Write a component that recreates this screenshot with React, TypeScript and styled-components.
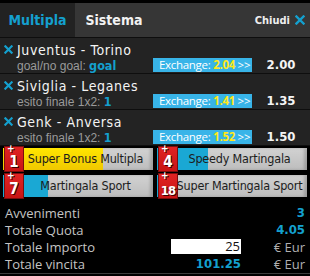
import React from "react";
import styled, { createGlobalStyle } from "styled-components";

const GlobalStyle = createGlobalStyle`
  html, body {
    margin: 0;
    padding: 0;
    background: #000;
  }
  * { box-sizing: border-box; }
`;

const blue = "#14a0cf";
const tahoma = `"DejaVu Sans Condensed", "DejaVu Sans", sans-serif`;
const segoe = `"Open Sans", "Liberation Sans", sans-serif`;

const Panel = styled.div`
  width: 310px;
  height: 276px;
  background: #000;
  border-top: 3px solid #000;
  font-family: ${tahoma};
  overflow: hidden;
`;

const Header = styled.div`
  display: flex;
  align-items: stretch;
  height: 35px;
  background: #363636;
  border-bottom: 1px solid #0e0e0e;
`;

const Tab = styled.div<{ active?: boolean }>`
  width: ${p => (p.active ? 75 : 78)}px;
  display: flex;
  align-items: center;
  justify-content: center;
  background: ${p => (p.active ? "#222" : "transparent")};
  color: ${p => (p.active ? blue : "#f2f2f2")};
  font-weight: bold;
  font-size: 14px;
`;

const Close = styled.div`
  margin-left: auto;
  display: flex;
  align-items: center;
  gap: 5px;
  padding-right: 5px;
  color: #eee;
  font-size: 11px;
  font-weight: bold;
`;

const Row = styled.div`
  height: 36px;
  background: #232323;
  border-bottom: 1px solid #0e0e0e;
  display: grid;
  grid-template-columns: 17px 1fr;
  padding-top: 4px;
`;

const RemoveIcon = styled.div`
  padding: 3px 0 0 4px;
`;

const RowBody = styled.div`
  display: flex;
  flex-direction: column;
`;

const Title = styled.div`
  height: 16px;
  line-height: 16px;
  color: #f4f4f4;
  font-size: 14px;
  letter-spacing: 0.6px;
`;

const Line = styled.div`
  display: flex;
  align-items: center;
  height: 14px;
`;

const Market = styled.div`
  flex: 1;
  align-self: flex-start;
  margin-top: 1px;
  font-family: "Liberation Sans", Arial, sans-serif;
  font-size: 12px;
  color: #9a9a9a;
  line-height: 13px;
`;

const Pick = styled.span`
  color: ${blue};
  font-family: ${tahoma};
  font-weight: bold;
  font-size: 12.5px;
`;

const Exchange = styled.div`
  width: 99px;
  height: 14px;
  background: #38b4e8;
  color: #fff;
  font-family: ${segoe};
  font-size: 11.5px;
  line-height: 14px;
  padding-left: 6px;
  white-space: nowrap;
  letter-spacing: -0.3px;
`;

const ExValue = styled.span`
  color: #ffe81a;
  font-weight: bold;
`;

const Odds = styled.div`
  width: 58px;
  text-align: center;
  color: #f4f4f4;
  font-weight: bold;
  font-size: 13px;
  line-height: 14px;
`;

const BonusGrid = styled.div`
  display: grid;
  grid-template-columns: 150px 150px;
  column-gap: 4px;
  row-gap: 5px;
  padding: 2px 3px 7px 3px;
`;

const BonusButton = styled.div`
  position: relative;
  height: 22px;
  background: linear-gradient(to bottom, #d2d2d2, #bdbdbd);
  box-shadow: inset -3px 0 3px rgba(0, 0, 0, 0.18);
`;

const Fill = styled.div<{ color: string }>`
  position: absolute;
  left: 0;
  top: 0;
  bottom: 0;
  background: ${p => p.color};
`;

const BonusLabel = styled.div`
  position: relative;
  height: 22px;
  line-height: 22px;
  padding: 0 3px 0 18px;
  text-align: center;
  white-space: nowrap;
  color: #1c1c1c;
  font-size: 12.5px;
  letter-spacing: -0.2px;
`;

const Badge = styled.div`
  position: absolute;
  left: 1px;
  top: -2px;
  width: 20px;
  height: 26px;
  background: linear-gradient(to bottom, #e02323, #c81414);
  border: 1px solid #7a0d0d;
  color: #fff;
  font-weight: bold;
  text-shadow: 1px 1px 0 #3a0000;
`;

const Plus = styled.span`
  position: absolute;
  left: 2px;
  top: -4px;
  font-size: 10px;
`;

const Count = styled.span<{ small?: boolean }>`
  position: absolute;
  left: 0;
  right: 0;
  bottom: 0;
  text-align: center;
  font-size: ${p => (p.small ? 13 : 15)}px;
  letter-spacing: ${p => (p.small ? -1 : 0)}px;
`;

const Summary = styled.div`
  display: grid;
  grid-template-columns: 1fr 70px 64px;
  grid-auto-rows: 17px;
  align-items: center;
  padding: 0 5px;
  font-family: ${segoe};
  font-size: 13px;
  color: #c4c4c4;
  border-bottom: 1px solid #3c3c3c;
  height: 70px;
`;

const Value = styled.div<{ span?: boolean }>`
  grid-column: ${p => (p.span ? "2 / 4" : "2")};
  text-align: right;
  color: ${blue};
  font-family: ${tahoma};
  font-weight: bold;
`;

const Unit = styled.div`
  text-align: right;
  color: #b0b0b0;
`;

const Amount = styled.div`
  height: 15px;
  background: #fff;
  color: #111;
  text-align: right;
  line-height: 15px;
  padding-right: 1px;
`;

const XIcon = ({ size }: { size: number }) => (
  <svg width={size} height={size} viewBox="0 0 10 10" style={{ display: "block" }}>
    <path d="M1.5 1.5 L8.5 8.5 M8.5 1.5 L1.5 8.5" stroke={blue} strokeWidth="2.4" strokeLinecap="square" />
  </svg>
);

const events = [
  { title: "Juventus - Torino", market: "goal/no goal:", pick: "goal", ex: "2.04", odds: "2.00" },
  { title: "Siviglia - Leganes", market: "esito finale 1x2:", pick: "1", ex: "1.41", odds: "1.35" },
  { title: "Genk - Anversa", market: "esito finale 1x2:", pick: "1", ex: "1.52", odds: "1.50" },
];

const bonuses = [
  { n: "1", label: "Super Bonus Multipla", fill: 100, color: "linear-gradient(to bottom, #ffe600, #f0c800)" },
  { n: "4", label: "Speedy Martingala", fill: 51, color: "#1aa8d4" },
  { n: "7", label: "Martingala Sport", fill: 45, color: "#1aa8d4" },
  { n: "18", label: "Super Martingala Sport", fill: 3, color: "#1aa8d4" },
];

export default function App() {
  return (
    <>
      <GlobalStyle />
      <Panel>
        <Header>
          <Tab active>Multipla</Tab>
          <Tab>Sistema</Tab>
          <Close>
            Chiudi <XIcon size={10} />
          </Close>
        </Header>

        {events.map(e => (
          <Row key={e.title}>
            <RemoveIcon>
              <XIcon size={9} />
            </RemoveIcon>
            <RowBody>
              <Title>{e.title}</Title>
              <Line>
                <Market>
                  {e.market} <Pick>{e.pick}</Pick>
                </Market>
                <Exchange>
                  Exchange: <ExValue>{e.ex}</ExValue> &gt;&gt;
                </Exchange>
                <Odds>{e.odds}</Odds>
              </Line>
            </RowBody>
          </Row>
        ))}

        <BonusGrid>
          {bonuses.map(b => (
            <BonusButton key={b.label}>
              <Fill color={b.color} style={{ width: b.fill }} />
              <BonusLabel>{b.label}</BonusLabel>
              <Badge>
                <Plus>+</Plus>
                <Count small={b.n.length > 1}>{b.n}</Count>
              </Badge>
            </BonusButton>
          ))}
        </BonusGrid>

        <Summary>
          <div>Avvenimenti</div>
          <Value span>3</Value>
          <div>Totale Quota</div>
          <Value span>4.05</Value>
          <div>Totale Importo</div>
          <Amount>25</Amount>
          <Unit>€ Eur</Unit>
          <div>Totale vincita</div>
          <Value>101.25</Value>
          <Unit>€ Eur</Unit>
        </Summary>
      </Panel>
    </>
  );
}
